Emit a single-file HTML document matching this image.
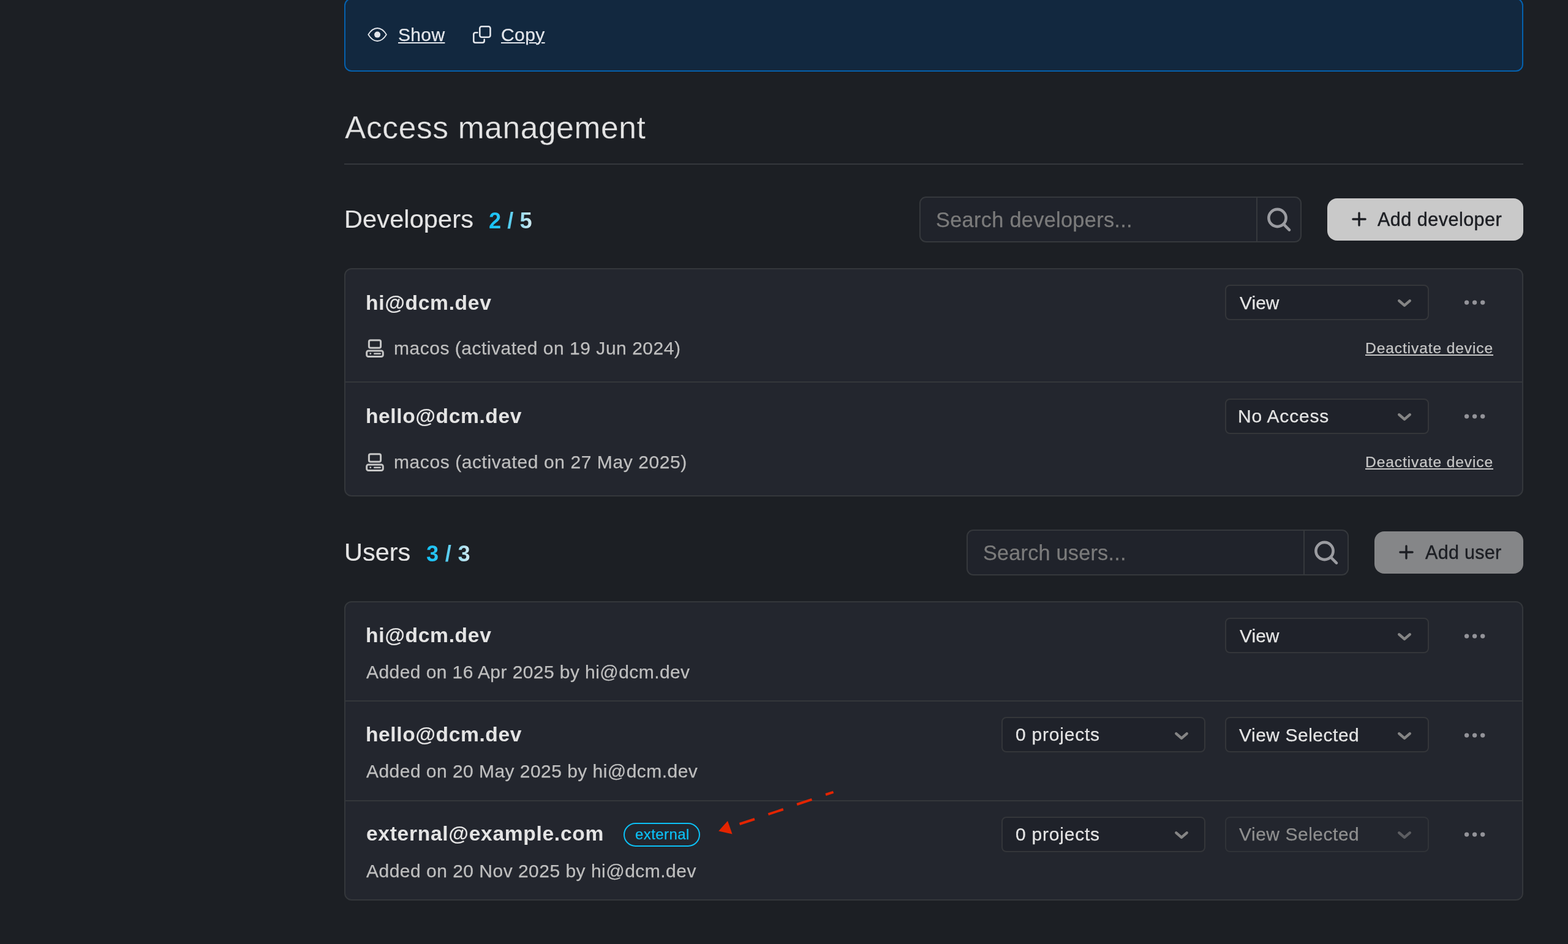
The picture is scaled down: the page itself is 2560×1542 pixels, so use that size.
<!DOCTYPE html>
<html lang="en">
<head>
<meta charset="utf-8">
<title>Access management</title>
<style>
*{box-sizing:border-box;margin:0;padding:0}
html,body{width:2560px;height:1542px;overflow:hidden;background:#1c1f24}
body{position:relative;font-family:"Liberation Sans",sans-serif;-webkit-font-smoothing:antialiased}
h1,h2,strong,a{font-weight:400;font-size:inherit;text-decoration:none}
ul{list-style:none}
button{all:unset}
.t{position:absolute;white-space:nowrap;line-height:1.2;font-weight:400;will-change:transform;-webkit-text-stroke:0.25px currentColor}
strong.t,.grad{-webkit-text-stroke:0}
h1 .t{-webkit-text-stroke:0.3px #1c1f24}
h2 .t{-webkit-text-stroke:0.15px currentColor}
h2 .grad{-webkit-text-stroke:0}
.ul{text-decoration:underline;text-decoration-thickness:2px;text-underline-offset:2px;text-decoration-skip-ink:auto}
.med{-webkit-text-stroke:0.45px #1c1e23}
.grad{background:linear-gradient(90deg,#10c1f8 0%,#38c6f0 35%,#d4eaf0 100%);-webkit-background-clip:text;background-clip:text;color:transparent !important}
.ic{position:absolute;overflow:visible}
.keybox,.card,.sel,.srch,.btn,.hr,.badge,.rdiv,.sdiv{position:absolute}
.keybox{background:#12283f;border:2px solid #0561ae;border-radius:12px}
.hr{background:#35383c}
.card{background:#23262e;border:2px solid #34373b;border-radius:12px}
.rdiv{background:#34373b}
.sel{border:2px solid #34363a;border-radius:8px}
.srch{background:#20232b;border:2px solid #35383c;border-radius:11px}
.sdiv{background:#35383c}
.btn{background:#c9c9c9;border-radius:16px}
.badge{border:2px solid #0cc0f5;border-radius:20px}
</style>
</head>
<body>
<main>
<section aria-label="License key">
<div class="keybox" style="left:562px;top:-3px;width:1925px;height:120px;"></div>
<svg class="ic" style="left:599px;top:43px" width="34" height="27" viewBox="0 0 34 27" aria-hidden="true"><path d="M2.3 13.5 C6.8 6.2 11.6 3 17.1 3 C22.6 3 27.4 6.2 31.9 13.5 C27.4 20.8 22.6 24 17.1 24 C11.6 24 6.8 20.8 2.3 13.5 Z" fill="none" stroke="#e3e6eb" stroke-width="1.8" stroke-linejoin="round"/><circle cx="17.1" cy="13.6" r="5" fill="#e3e6eb"/></svg>
<a class="lnk"><span id="t_show" class="t ul" style="left:649.50px;top:38.75px;font-size:30.0px;letter-spacing:0.333px;color:#e3e6eb;">Show</span></a>
<svg class="ic" style="left:770px;top:40px" width="34" height="34" viewBox="0 0 34 34" aria-hidden="true"><rect x="13.3" y="3.3" width="17.2" height="17.4" rx="3" fill="none" stroke="#e3e6eb" stroke-width="2.6"/><path d="M9.5 13.3 H6.3 Q3.3 13.3 3.3 16.3 V26.7 Q3.3 29.7 6.3 29.7 H17.7 Q20.7 29.7 20.7 26.7 V24.5" fill="none" stroke="#e3e6eb" stroke-width="2.6" stroke-linecap="round"/></svg>
<a class="lnk"><span id="t_copy" class="t ul" style="left:818.10px;top:38.75px;font-size:30.0px;letter-spacing:0.400px;color:#e3e6eb;">Copy</span></a>
</section>
<h1><span id="t_h1" class="t" style="left:563.00px;top:178.25px;font-size:51.5px;letter-spacing:0.625px;color:#e4e4e4;">Access management</span></h1>
<div class="hr" style="left:562px;top:267px;width:1925px;height:2px;"></div>
<section aria-label="Developers">
<header>
<h2><span id="t_dev" class="t" style="left:561.50px;top:333.25px;font-size:41.5px;letter-spacing:0.111px;color:#e4e4e4;">Developers</span><span id="t_devn" class="t grad" style="left:798.00px;top:338.55px;font-size:36.3px;letter-spacing:0.000px;color:#0cc0f5;font-weight:700;">2 / 5</span></h2>
<div class="srch" style="left:1501px;top:321px;width:624px;height:75px;"><div class="sdiv" style="left:548px;top:0px;width:2px;height:71px;"></div></div>
<span id="t_sdev" class="t" style="left:1528.00px;top:339.25px;font-size:34.3px;letter-spacing:0.316px;color:#7b7b7b;">Search developers...</span>
<svg class="ic" style="left:2067px;top:338px" width="44" height="44" viewBox="0 0 44 44" aria-hidden="true"><circle cx="18.5" cy="18" r="14.1" fill="none" stroke="#9b9ca1" stroke-width="4.6"/><path d="M28.8 28.4 L38 37.6" stroke="#9b9ca1" stroke-width="4.6" stroke-linecap="round"/></svg>
<div class="btn" style="left:2167px;top:324px;width:320px;height:69px;"></div>
<svg class="ic" style="left:2204.7px;top:344px" width="28" height="28" viewBox="0 0 28 28" aria-hidden="true"><path d="M3.9 14 H24.1 M14 3.9 V24.1" stroke="#1c1e23" stroke-width="3.4" stroke-linecap="round" fill="none"/></svg>
<button type="button"><span id="t_adev" class="t med" style="left:2249.00px;top:340.25px;font-size:30.5px;letter-spacing:0.500px;color:#1c1e23;">Add developer</span></button>
</header>
<ul>
<div class="card" style="left:562px;top:438px;width:1925px;height:373px;"><div class="rdiv" style="left:0px;top:183px;width:1921px;height:2px;"></div></div>
<li>
<strong id="t_d1" class="t" style="left:597.00px;top:474.75px;font-size:33.6px;letter-spacing:0.667px;color:#e4e4e4;font-weight:700;">hi@dcm.dev</strong>
<svg class="ic" style="left:597px;top:554px" width="30" height="31" viewBox="0 0 30 31" aria-hidden="true"><rect x="5.4" y="1.7" width="19.2" height="12.6" rx="2.6" fill="none" stroke="#c6c6c6" stroke-width="3"/><rect x="1.7" y="18.9" width="26.6" height="9.6" rx="2.8" fill="none" stroke="#c6c6c6" stroke-width="3"/><circle cx="7.8" cy="23.7" r="1.4" fill="#c6c6c6"/><path d="M14.2 23.7 H23.8" stroke="#c6c6c6" stroke-width="2.4" stroke-linecap="round"/></svg>
<span id="t_d1m" class="t" style="left:643.00px;top:551.25px;font-size:30.0px;letter-spacing:0.516px;color:#bfbfbf;">macos (activated on 19 Jun 2024)</span>
<div class="sel" style="left:2000px;top:465px;width:333px;height:58px;background:#1f222a;border-color:#34363a;"></div>
<span id="t_d1v" class="t" style="left:2023.50px;top:476.75px;font-size:30.0px;letter-spacing:0.000px;color:#e4e4e4;">View</span>
<svg class="ic" style="left:2277.3px;top:483.3px" width="32" height="24" viewBox="0 0 32 24" aria-hidden="true"><path d="M7.3 8.3 L16 15.9 L24.7 8.3" fill="none" stroke="#858585" stroke-width="4.4" stroke-linecap="round" stroke-linejoin="round"/></svg>
<svg class="ic" style="left:2386px;top:486.1px" width="44" height="16" viewBox="0 0 44 16" aria-hidden="true"><circle cx="8.6" cy="8.1" r="3.7" fill="#939399"/><circle cx="21.6" cy="8.1" r="3.7" fill="#939399"/><circle cx="34.7" cy="8.1" r="3.7" fill="#939399"/></svg>
<a class="lnk"><span id="t_d1x" class="t ul" style="left:2228.50px;top:553.75px;font-size:24.6px;letter-spacing:0.875px;color:#c6c6c6;">Deactivate device</span></a>
</li>
<li>
<strong id="t_d2" class="t" style="left:597.00px;top:660.25px;font-size:33.6px;letter-spacing:0.583px;color:#e4e4e4;font-weight:700;">hello@dcm.dev</strong>
<svg class="ic" style="left:597px;top:739.5px" width="30" height="31" viewBox="0 0 30 31" aria-hidden="true"><rect x="5.4" y="1.7" width="19.2" height="12.6" rx="2.6" fill="none" stroke="#c6c6c6" stroke-width="3"/><rect x="1.7" y="18.9" width="26.6" height="9.6" rx="2.8" fill="none" stroke="#c6c6c6" stroke-width="3"/><circle cx="7.8" cy="23.7" r="1.4" fill="#c6c6c6"/><path d="M14.2 23.7 H23.8" stroke="#c6c6c6" stroke-width="2.4" stroke-linecap="round"/></svg>
<span id="t_d2m" class="t" style="left:643.00px;top:736.75px;font-size:30.0px;letter-spacing:0.581px;color:#bfbfbf;">macos (activated on 27 May 2025)</span>
<div class="sel" style="left:2000px;top:650.5px;width:333px;height:58px;background:#1f222a;border-color:#34363a;"></div>
<span id="t_d2v" class="t" style="left:2021.30px;top:662.05px;font-size:30.0px;letter-spacing:0.825px;color:#e4e4e4;">No Access</span>
<svg class="ic" style="left:2277.3px;top:668.8px" width="32" height="24" viewBox="0 0 32 24" aria-hidden="true"><path d="M7.3 8.3 L16 15.9 L24.7 8.3" fill="none" stroke="#858585" stroke-width="4.4" stroke-linecap="round" stroke-linejoin="round"/></svg>
<svg class="ic" style="left:2386px;top:671.6px" width="44" height="16" viewBox="0 0 44 16" aria-hidden="true"><circle cx="8.6" cy="8.1" r="3.7" fill="#939399"/><circle cx="21.6" cy="8.1" r="3.7" fill="#939399"/><circle cx="34.7" cy="8.1" r="3.7" fill="#939399"/></svg>
<a class="lnk"><span id="t_d2x" class="t ul" style="left:2228.50px;top:739.75px;font-size:24.6px;letter-spacing:0.875px;color:#c6c6c6;">Deactivate device</span></a>
</li>
</ul>
</section>
<section aria-label="Users">
<header>
<h2><span id="t_usr" class="t" style="left:561.50px;top:877.25px;font-size:41.5px;letter-spacing:0.000px;color:#e4e4e4;">Users</span><span id="t_usrn" class="t grad" style="left:695.50px;top:882.55px;font-size:36.3px;letter-spacing:0.250px;color:#0cc0f5;font-weight:700;">3 / 3</span></h2>
<div class="srch" style="left:1578px;top:865px;width:624px;height:75px;"><div class="sdiv" style="left:548px;top:0px;width:2px;height:71px;"></div></div>
<span id="t_susr" class="t" style="left:1605.15px;top:883.15px;font-size:34.3px;letter-spacing:0.200px;color:#7b7b7b;">Search users...</span>
<svg class="ic" style="left:2144px;top:882px" width="44" height="44" viewBox="0 0 44 44" aria-hidden="true"><circle cx="18.5" cy="18" r="14.1" fill="none" stroke="#9b9ca1" stroke-width="4.6"/><path d="M28.8 28.4 L38 37.6" stroke="#9b9ca1" stroke-width="4.6" stroke-linecap="round"/></svg>
<div class="btn" style="left:2244px;top:868px;width:243px;height:69px;background:#858688;"></div>
<svg class="ic" style="left:2281.7px;top:888px" width="28" height="28" viewBox="0 0 28 28" aria-hidden="true"><path d="M3.9 14 H24.1 M14 3.9 V24.1" stroke="#1c1e23" stroke-width="3.4" stroke-linecap="round" fill="none"/></svg>
<button type="button" disabled><span id="t_ausr" class="t med" style="left:2327.00px;top:883.75px;font-size:30.5px;letter-spacing:0.286px;color:#1c1e23;">Add user</span></button>
</header>
<ul>
<div class="card" style="left:562px;top:982px;width:1925px;height:488.5px;"><div class="rdiv" style="left:0px;top:160px;width:1921px;height:2px;"></div><div class="rdiv" style="left:0px;top:322.5px;width:1921px;height:2px;"></div></div>
<li>
<strong id="t_u1" class="t" style="left:597.00px;top:1017.75px;font-size:33.6px;letter-spacing:0.667px;color:#e4e4e4;font-weight:700;">hi@dcm.dev</strong>
<span id="t_u1a" class="t" style="left:598.00px;top:1079.75px;font-size:30.0px;letter-spacing:0.424px;color:#bfbfbf;">Added on 16 Apr 2025 by hi@dcm.dev</span>
<div class="sel" style="left:2000px;top:1009px;width:333px;height:58px;background:#1f222a;border-color:#34363a;"></div>
<span id="t_u1v" class="t" style="left:2023.50px;top:1020.75px;font-size:30.0px;letter-spacing:0.000px;color:#e4e4e4;">View</span>
<svg class="ic" style="left:2277.3px;top:1027.8px" width="32" height="24" viewBox="0 0 32 24" aria-hidden="true"><path d="M7.3 8.3 L16 15.9 L24.7 8.3" fill="none" stroke="#858585" stroke-width="4.4" stroke-linecap="round" stroke-linejoin="round"/></svg>
<svg class="ic" style="left:2386px;top:1030.6px" width="44" height="16" viewBox="0 0 44 16" aria-hidden="true"><circle cx="8.6" cy="8.1" r="3.7" fill="#939399"/><circle cx="21.6" cy="8.1" r="3.7" fill="#939399"/><circle cx="34.7" cy="8.1" r="3.7" fill="#939399"/></svg>
</li>
<li>
<strong id="t_u2" class="t" style="left:597.00px;top:1180.25px;font-size:33.6px;letter-spacing:0.583px;color:#e4e4e4;font-weight:700;">hello@dcm.dev</strong>
<span id="t_u2a" class="t" style="left:598.00px;top:1242.25px;font-size:30.0px;letter-spacing:0.455px;color:#bfbfbf;">Added on 20 May 2025 by hi@dcm.dev</span>
<div class="sel" style="left:1635px;top:1171px;width:333px;height:58px;background:#1f222a;border-color:#34363a;"></div>
<span id="t_u2p" class="t" style="left:1658.00px;top:1182.45px;font-size:30.0px;letter-spacing:0.778px;color:#e4e4e4;">0 projects</span>
<svg class="ic" style="left:1912.8px;top:1189.8px" width="32" height="24" viewBox="0 0 32 24" aria-hidden="true"><path d="M7.3 8.3 L16 15.9 L24.7 8.3" fill="none" stroke="#858585" stroke-width="4.4" stroke-linecap="round" stroke-linejoin="round"/></svg>
<div class="sel" style="left:2000px;top:1171px;width:333px;height:58px;background:#1f222a;border-color:#34363a;"></div>
<span id="t_u2v" class="t" style="left:2023.30px;top:1182.55px;font-size:30.0px;letter-spacing:0.517px;color:#e4e4e4;">View Selected</span>
<svg class="ic" style="left:2277.3px;top:1189.8px" width="32" height="24" viewBox="0 0 32 24" aria-hidden="true"><path d="M7.3 8.3 L16 15.9 L24.7 8.3" fill="none" stroke="#858585" stroke-width="4.4" stroke-linecap="round" stroke-linejoin="round"/></svg>
<svg class="ic" style="left:2386px;top:1192.6px" width="44" height="16" viewBox="0 0 44 16" aria-hidden="true"><circle cx="8.6" cy="8.1" r="3.7" fill="#939399"/><circle cx="21.6" cy="8.1" r="3.7" fill="#939399"/><circle cx="34.7" cy="8.1" r="3.7" fill="#939399"/></svg>
</li>
<li>
<strong id="t_u3" class="t" style="left:598.00px;top:1342.25px;font-size:33.6px;letter-spacing:0.684px;color:#e4e4e4;font-weight:700;">external@example.com</strong>
<div class="badge" style="left:1018px;top:1344px;width:125px;height:38.5px;"></div>
<span id="t_u3b" class="t" style="left:1037.00px;top:1348.75px;font-size:24.0px;letter-spacing:0.429px;color:#0cc0f5;">external</span>
<span id="t_u3a" class="t" style="left:598.00px;top:1404.75px;font-size:30.0px;letter-spacing:0.485px;color:#bfbfbf;">Added on 20 Nov 2025 by hi@dcm.dev</span>
<div class="sel" style="left:1635px;top:1333.5px;width:333px;height:58px;background:#1f222a;border-color:#34363a;"></div>
<span id="t_u3p" class="t" style="left:1658.00px;top:1344.95px;font-size:30.0px;letter-spacing:0.778px;color:#e4e4e4;">0 projects</span>
<svg class="ic" style="left:1912.8px;top:1352.3px" width="32" height="24" viewBox="0 0 32 24" aria-hidden="true"><path d="M7.3 8.3 L16 15.9 L24.7 8.3" fill="none" stroke="#858585" stroke-width="4.4" stroke-linecap="round" stroke-linejoin="round"/></svg>
<div class="sel" style="left:2000px;top:1333.5px;width:333px;height:58px;background:#23262e;border-color:#303338;"></div>
<span id="t_u3v" class="t" style="left:2023.30px;top:1344.95px;font-size:30.0px;letter-spacing:0.517px;color:#8f8f8f;">View Selected</span>
<svg class="ic" style="left:2277.3px;top:1352.3px" width="32" height="24" viewBox="0 0 32 24" aria-hidden="true"><path d="M7.3 8.3 L16 15.9 L24.7 8.3" fill="none" stroke="#5d5e62" stroke-width="4.4" stroke-linecap="round" stroke-linejoin="round"/></svg>
<svg class="ic" style="left:2386px;top:1355.1px" width="44" height="16" viewBox="0 0 44 16" aria-hidden="true"><circle cx="8.6" cy="8.1" r="3.7" fill="#939399"/><circle cx="21.6" cy="8.1" r="3.7" fill="#939399"/><circle cx="34.7" cy="8.1" r="3.7" fill="#939399"/></svg>
</li>
</ul>
</section>
<svg class="ic" style="left:1160px;top:1280px" width="220" height="100" viewBox="0 0 220 100" aria-hidden="true"><path d="M200.6 13.8 L188 18 M165.5 25.8 L141.1 34 M118.8 42 L94.3 50.1 M72 58 L47.5 66" stroke="#e32400" stroke-width="4" fill="none"/><path d="M13.2 77.5 L28 60.9 L35.6 82.5 Z" fill="#e32400"/></svg>
</main>
</body>
</html>
